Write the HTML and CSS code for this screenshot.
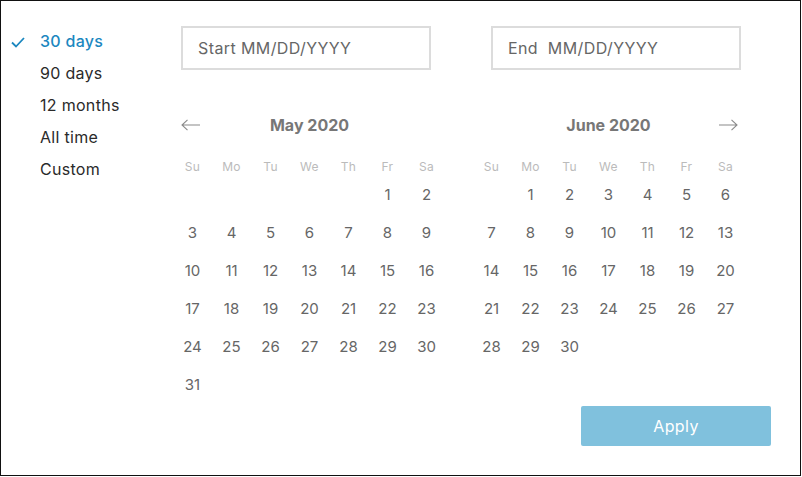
FILE: index.html
```html
<!DOCTYPE html>
<html>
<head>
<meta charset="utf-8">
<link rel="stylesheet" href="styles.css">
</head>
<body>
<div class="panel">
  <ul class="presets">
    <li class="preset selected">
      <svg class="check" width="14" height="11" viewBox="0 0 14 11"><polyline points="1,5.5 5,9.5 13,1" fill="none" stroke="#1b87bf" stroke-width="1.8"/></svg>
      30 days
    </li>
    <li class="preset">90 days</li>
    <li class="preset">12 months</li>
    <li class="preset">All time</li>
    <li class="preset">Custom</li>
  </ul>
  <div class="main">
    <div class="inputs">
      <div class="date-input">Start MM/DD/YYYY</div>
      <div class="date-input">End&nbsp; MM/DD/YYYY</div>
    </div>
    <div class="calendars">
      <div class="month">
        <div class="month-head">
          <svg class="nav prev" width="20" height="12" viewBox="0 0 20 12"><path d="M19 6H1M6.5 0.8L1 6l5.5 5.2" fill="none" stroke="#8a8a8a" stroke-width="1.1"/></svg>
          <span class="month-title">May 2020</span>
        </div>
        <div class="grid">
          <span class="wd">Su</span><span class="wd">Mo</span><span class="wd">Tu</span><span class="wd">We</span><span class="wd">Th</span><span class="wd">Fr</span><span class="wd">Sa</span>
          <span></span><span></span><span></span><span></span><span></span><span class="d">1</span><span class="d">2</span>
          <span class="d">3</span><span class="d">4</span><span class="d">5</span><span class="d">6</span><span class="d">7</span><span class="d">8</span><span class="d">9</span>
          <span class="d">10</span><span class="d">11</span><span class="d">12</span><span class="d">13</span><span class="d">14</span><span class="d">15</span><span class="d">16</span>
          <span class="d">17</span><span class="d">18</span><span class="d">19</span><span class="d">20</span><span class="d">21</span><span class="d">22</span><span class="d">23</span>
          <span class="d">24</span><span class="d">25</span><span class="d">26</span><span class="d">27</span><span class="d">28</span><span class="d">29</span><span class="d">30</span>
          <span class="d">31</span>
        </div>
      </div>
      <div class="month">
        <div class="month-head">
          <span class="month-title">June 2020</span>
          <svg class="nav next" width="20" height="12" viewBox="0 0 20 12"><path d="M1 6h18M13.5 0.8L19 6l-5.5 5.2" fill="none" stroke="#8a8a8a" stroke-width="1.1"/></svg>
        </div>
        <div class="grid">
          <span class="wd">Su</span><span class="wd">Mo</span><span class="wd">Tu</span><span class="wd">We</span><span class="wd">Th</span><span class="wd">Fr</span><span class="wd">Sa</span>
          <span></span><span class="d">1</span><span class="d">2</span><span class="d">3</span><span class="d">4</span><span class="d">5</span><span class="d">6</span>
          <span class="d">7</span><span class="d">8</span><span class="d">9</span><span class="d">10</span><span class="d">11</span><span class="d">12</span><span class="d">13</span>
          <span class="d">14</span><span class="d">15</span><span class="d">16</span><span class="d">17</span><span class="d">18</span><span class="d">19</span><span class="d">20</span>
          <span class="d">21</span><span class="d">22</span><span class="d">23</span><span class="d">24</span><span class="d">25</span><span class="d">26</span><span class="d">27</span>
          <span class="d">28</span><span class="d">29</span><span class="d">30</span>
        </div>
      </div>
    </div>
    <div class="footer">
      <button class="apply">Apply</button>
    </div>
  </div>
</div>
</body>
</html>
```

FILE: styles.css
```css
* { box-sizing: border-box; }
html, body { margin: 0; padding: 0; background: #fff; }
body { font-family: Inter, "Open Sans", sans-serif; }

.panel {
  width: 801px;
  height: 476px;
  border: 1px solid #111;
  display: flex;
}

.presets {
  list-style: none;
  margin: 0;
  padding: 24px 0 0 0;
  width: 171px;
  flex: none;
}
.preset {
  height: 32px;
  line-height: 32px;
  padding-left: 39px;
  font-size: 16px;
  letter-spacing: 0.3px;
  color: #2a2a2a;
  position: relative;
}
.preset.selected { color: #1b87bf; font-weight: 500; }
.check {
  position: absolute;
  left: 10px;
  top: 12px;
}

.main {
  flex: 1;
  display: flex;
  flex-direction: column;
  padding-right: 29px;
}

.inputs {
  display: flex;
  gap: 60px;
  padding: 25px 0 0 9px;
}
.date-input {
  width: 250px;
  height: 44px;
  border: 2px solid #dcdcdc;
  padding-left: 15px;
  line-height: 40px;
  font-size: 16px;
  letter-spacing: 0.4px;
  color: #666;
}

.calendars {
  display: flex;
  gap: 26px;
  margin: 40px 0 0 1px;
}
.month { width: 273px; }
.month-head {
  height: 30px;
  display: flex;
  align-items: center;
  justify-content: center;
  position: relative;
  margin-bottom: 18px;
}
.month-title {
  font-size: 16px;
  font-weight: 700;
  color: #777;
}
.nav { position: absolute; top: 9px; }
.nav.prev { left: 8px; }
.nav.next { right: 7px; }

.grid {
  display: grid;
  grid-template-columns: repeat(7, 39px);
  grid-template-rows: 18px;
  grid-auto-rows: 38px;
}
.grid .wd {
  font-size: 12px;
  color: #bbb;
  text-align: center;
  line-height: 18px;
  letter-spacing: 0.3px;
}
.grid .d {
  font-size: 15px;
  color: #666;
  text-align: center;
  line-height: 38px;
}

.footer {
  display: flex;
  justify-content: flex-end;
  margin-top: 2px;
}
.apply {
  width: 190px;
  height: 40px;
  border: none;
  border-radius: 2px;
  background: #80c1dd;
  color: #fff;
  font-family: inherit;
  font-size: 16px;
  letter-spacing: 0.4px;
}
```
